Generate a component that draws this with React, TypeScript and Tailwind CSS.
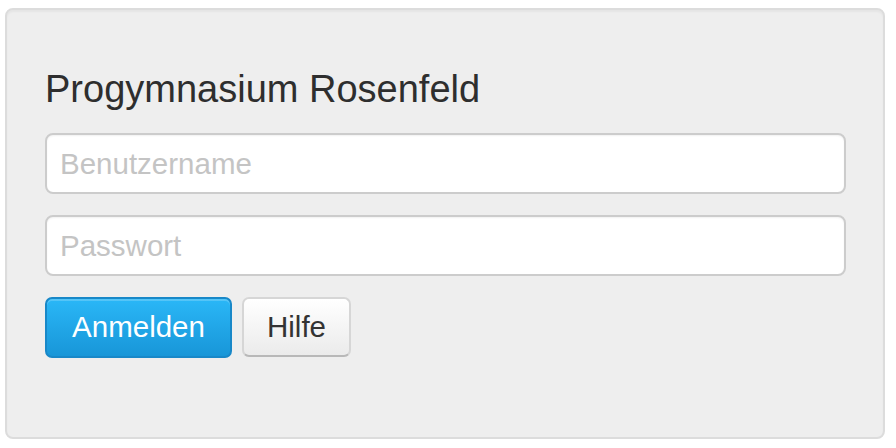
export default function App() {
  return (
    <div className="w-[896px] h-[448px] bg-white pt-[8px] pl-[5px]" style={{ fontFamily: '"Liberation Sans", Arial, sans-serif' }}>
      <div className="w-[880px] h-[431px] bg-[#eeeeee] border-2 border-[#dcdcdc] rounded-[8px] shadow-[inset_0_2px_2px_rgba(0,0,0,0.04)] pl-[38px] pr-[37px] pt-[57px]">
        <h1 className="text-[38px] leading-[44px] text-[#2e2e2e] mb-[22px]">Progymnasium Rosenfeld</h1>
        <div className="flex flex-col gap-[21px]">
          <input
            className="h-[61px] w-full bg-white border-2 border-[#cccccc] rounded-[8px] px-[13px] text-[29.5px] text-[#555] placeholder:text-[#c4c4c4] shadow-[inset_0_1px_2px_rgba(0,0,0,0.06)] outline-none"
            placeholder="Benutzername"
          />
          <input
            type="text"
            className="h-[61px] w-full bg-white border-2 border-[#cccccc] rounded-[8px] px-[13px] text-[29.5px] text-[#555] placeholder:text-[#c4c4c4] shadow-[inset_0_1px_2px_rgba(0,0,0,0.06)] outline-none"
            placeholder="Passwort"
          />
        </div>
        <div className="flex gap-[10px] mt-[21px]">
          <button className="h-[61px] w-[187px] rounded-[7px] border-2 border-[#1888c8] bg-gradient-to-b from-[#2ab7f7] to-[#1896d8] text-white text-[29.5px] shadow-[inset_0_2px_0_rgba(255,255,255,0.2)]">
            Anmelden
          </button>
          <button className="h-[60px] w-[109px] rounded-[7px] border-2 border-[#d6d6d6] border-b-[#b8b8b8] bg-gradient-to-b from-white to-[#ebebeb] text-[#333] text-[29.5px]">
            Hilfe
          </button>
        </div>
      </div>
    </div>
  )
}
